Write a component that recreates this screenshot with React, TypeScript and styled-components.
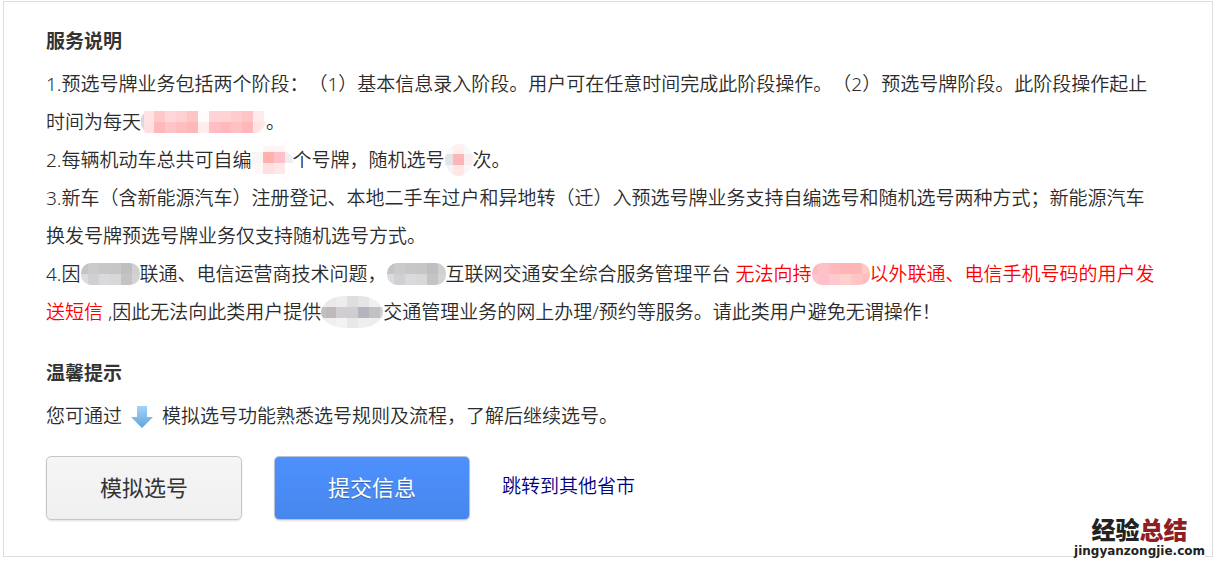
import React from 'react';
import styled, { createGlobalStyle } from 'styled-components';

const GlobalStyle = createGlobalStyle`
  *, *::before, *::after { box-sizing: border-box; }
  body {
    margin: 0;
    background: #fff;
    color: #2b2b2b;
    font-family: 'Noto Sans', 'Noto Sans CJK SC', sans-serif;
    font-size: 19px;
    font-weight: 350;
    line-height: 38px;
    text-spacing-trim: space-all;
  }
`;

const Card = styled.main`
  position: relative;
  margin: 1px 7px 12px 3px;
  padding: 20px 52px 36px 42px;
  border: 1px solid #ddd;
  background: #fff;
`;

const Section = styled.section`
  margin-bottom: 23px;

  &:last-of-type {
    margin-bottom: 21px;
  }
`;

const Title = styled.h2`
  margin: 0 0 5px;
  color: #333;
  font-size: 19px;
  line-height: 38px;
  font-weight: 700;
`;

const Paragraph = styled.p`
  margin: 0;
`;

const Warning = styled.span`
  color: #f00;
`;

const MosaicSvg = styled.svg`
  display: inline-block;
  vertical-align: middle;
  margin: -8px 0 -4px;
`;

const ArrowSvg = styled.svg`
  display: inline-block;
  vertical-align: middle;
  margin: -2px 8px 0;
`;

const Actions = styled.div`
  display: flex;
  align-items: center;
  gap: 32px;
`;

const ActionButton = styled.button<{ $primary?: boolean }>`
  width: 196px;
  height: 64px;
  padding: 0 0 4px;
  border: 1px solid ${p => (p.$primary ? '#b9c3d6' : '#c6c6c6')};
  border-radius: 5px;
  background: ${p =>
    p.$primary
      ? 'linear-gradient(#4d90fe, #4787ed)'
      : 'linear-gradient(#f5f5f5, #f0f0f0)'};
  box-shadow: 0 1px 2px rgba(0, 0, 0, 0.12);
  color: ${p => (p.$primary ? '#fff' : '#333')};
  text-shadow: ${p => (p.$primary ? '0 1px 1px rgba(0, 0, 0, 0.3)' : 'none')};
  font-family: inherit;
  font-size: 22px;
  cursor: pointer;
`;

const ProvinceLink = styled.a`
  padding-bottom: 4px;
  color: #000080;
  text-decoration: none;
`;

const Watermark = styled.div`
  position: absolute;
  right: 7px;
  bottom: -4px;
  display: flex;
  flex-direction: column;
  align-items: center;
  color: #222;
`;

const WatermarkName = styled.strong`
  font-size: 24px;
  line-height: 24px;
  font-weight: 900;
`;

const WatermarkAccent = styled.span`
  color: #8e2024;
`;

const WatermarkSite = styled.span`
  background: #fff;
  font-family: 'DejaVu Sans', sans-serif;
  font-size: 12px;
  font-weight: 700;
  line-height: 18px;
`;

type MosaicProps = {
  id: string;
  width: number;
  height: number;
  columns: number[];
  rows: number[];
  colors: string[][];
  shape?: React.ReactNode;
};

function Mosaic({ id, width, height, columns, rows, colors, shape }: MosaicProps) {
  return (
    <MosaicSvg width={width} height={height} aria-hidden="true" shapeRendering="crispEdges">
      <clipPath id={id}>
        {shape ?? <rect width={width} height={height} rx="10" />}
      </clipPath>
      <g clipPath={`url(#${id})`}>
        {colors.map((line, r) =>
          line.map((fill, c) => (
            <rect
              key={`${r}-${c}`}
              x={columns[c]}
              y={rows[r]}
              width={(columns[c + 1] ?? width) - columns[c]}
              height={(rows[r + 1] ?? height) - rows[r]}
              fill={fill}
            />
          )),
        )}
      </g>
    </MosaicSvg>
  );
}

const GreyRegion = ({ id }: { id: string }) => (
  <Mosaic
    id={id}
    width={59}
    height={22}
    columns={[0, 7, 18, 29, 40, 51]}
    rows={[0, 11]}
    colors={[
      ['#c4c4c6', '#cbcbcb', '#c7c7c7', '#c6c6c7', '#bfbfc1', '#d0d0d0'],
      ['#dcdce0', '#d0cfd1', '#dadadc', '#d8d8da', '#c5c3c4', '#d3d3d3'],
    ]}
  />
);

const DownArrow = () => (
  <ArrowSvg width="24" height="24" viewBox="0 0 24 24" aria-hidden="true">
    <defs>
      <linearGradient id="arrow-fill" x1="0" y1="0" x2="0" y2="1">
        <stop offset="0" stopColor="#a6d3f8" />
        <stop offset="1" stopColor="#60a5da" />
      </linearGradient>
    </defs>
    <path d="M7 1h10v11h6L12 23 1 12h6z" fill="url(#arrow-fill)" />
  </ArrowSvg>
);

export default function App() {
  return (
    <>
      <GlobalStyle />
      <Card lang="zh-CN">
        <Section>
          <Title>服务说明</Title>
          <Paragraph>
            1.预选号牌业务包括两个阶段：（1）基本信息录入阶段。用户可在任意时间完成此阶段操作。（2）预选号牌阶段。此阶段操作起止时间为每天
            <Mosaic
              id="hours"
              width={125}
              height={22}
              columns={[0, 3, 13, 24, 35, 46, 57, 68, 79, 90, 101, 112, 123]}
              rows={[0, 11]}
              colors={[
                ['#d5d7dc', '#ffe2e2', '#ffc9ca', '#ffd6da', '#ffd0d2', '#ffc5c6', '#fffdfb', '#ffd2d5', '#ffd2d3', '#ffccce', '#ffc5c6', '#ffeaeb', '#fff'],
                ['#d9dce0', '#ffdfe0', '#ffb9ba', '#ffc4c9', '#ffbdbf', '#ffb8b8', '#ffeeeb', '#ffbec3', '#ffb8bc', '#ffc1c3', '#ffb8b9', '#ffe3e5', '#ececef'],
              ]}
              shape={<path d="M4 0H123V11H125L122 17L117 22H4L0 14V7Z" />}
            />
            。
          </Paragraph>
          <Paragraph>
            2.每辆机动车总共可自编
            <Mosaic
              id="custom-count"
              width={41}
              height={28}
              columns={[0, 11, 22, 33]}
              rows={[0, 6, 17]}
              colors={[
                ['#fff', '#fff3f3', '#fff5f5', '#fff'],
                ['#f8f5f5', '#ffb2ad', '#ffc1c7', '#eeeef1'],
                ['#fdf7f5', '#ffdfe1', '#ffe6e8', '#fff'],
              ]}
              shape={<path d="M11 0H33V5L41 11V17H33V28H4L0 20V6H8Z" />}
            />
            个号牌，随机选号
            <Mosaic
              id="random-count"
              width={28}
              height={32}
              columns={[0, 8, 19]}
              rows={[0, 10, 21]}
              colors={[
                ['#faf8f8', '#ffefef', '#f9f8f8'],
                ['#e4e4e8', '#ffb5b5', '#f7eeee'],
                ['#f4f4f6', '#ffe7e7', '#f7f7f7'],
              ]}
              shape={<ellipse cx="14" cy="16" rx="14" ry="16" />}
            />
            次。
          </Paragraph>
          <Paragraph>
            3.新车（含新能源汽车）注册登记、本地二手车过户和异地转（迁）入预选号牌业务支持自编选号和随机选号两种方式；新能源汽车换发号牌预选号牌业务仅支持随机选号方式。
          </Paragraph>
          <Paragraph>
            4.因
            <GreyRegion id="region-1" />
            联通、电信运营商技术问题，
            <GreyRegion id="region-2" />
            互联网交通安全综合服务管理平台{' '}
            <Warning>
              无法向持
              <Mosaic
                id="region-3"
                width={58}
                height={22}
                columns={[0, 6, 17, 28, 39, 50]}
                rows={[0, 11]}
                colors={[
                  ['#ffbabd', '#ffc0c6', '#ffb9bc', '#ffb5b5', '#ffb5b5', '#ffcac6'],
                  ['#ffc5ce', '#ffc0c9', '#ffc9cd', '#ffcfce', '#ffc4c4', '#ffbdbb'],
                ]}
              />
              以外联通、电信手机号码的用户发送短信
            </Warning>{' '}
            ,因此无法向此类用户提供
            <Mosaic
              id="region-4"
              width={62}
              height={32}
              columns={[0, 5, 15, 26, 37, 48, 59]}
              rows={[0, 11, 22]}
              colors={[
                ['#eee', '#e9e9ea', '#ededed', '#dededf', '#e5e5e5', '#efeff0', '#f3f3f3'],
                ['#c2bfc1', '#beb9bb', '#d0ced0', '#cfcdd0', '#b4b4bd', '#c0c0c5', '#d0d0d2'],
                ['#eee', '#efefef', '#f3f3f3', '#e8e8e8', '#eeeef0', '#ededee', '#f3f3f3'],
              ]}
              shape={<rect width="62" height="32" rx="24" ry="16" />}
            />
            交通管理业务的网上办理/预约等服务。请此类用户避免无谓操作！
          </Paragraph>
        </Section>
        <Section>
          <Title>温馨提示</Title>
          <Paragraph>
            您可通过
            <DownArrow />
            模拟选号功能熟悉选号规则及流程，了解后继续选号。
          </Paragraph>
        </Section>
        <Actions>
          <ActionButton type="button">模拟选号</ActionButton>
          <ActionButton type="button" $primary>
            提交信息
          </ActionButton>
          <ProvinceLink href="#provinces">跳转到其他省市</ProvinceLink>
        </Actions>
        <Watermark>
          <WatermarkName>
            经验<WatermarkAccent>总结</WatermarkAccent>
          </WatermarkName>
          <WatermarkSite>jingyanzongjie.com</WatermarkSite>
        </Watermark>
      </Card>
    </>
  );
}
